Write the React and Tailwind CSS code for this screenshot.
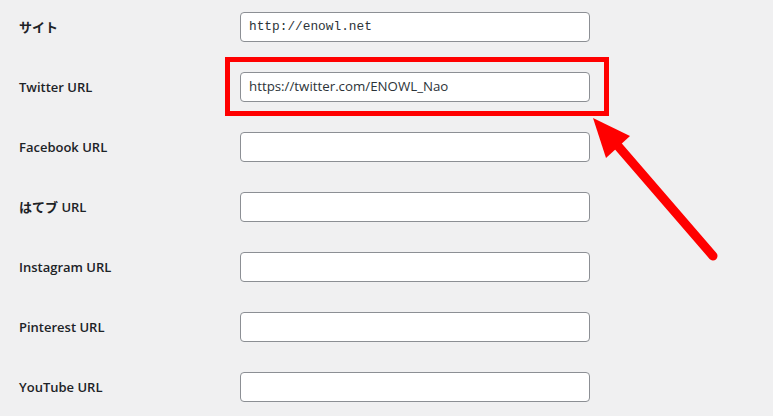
import React from "react";

const fields = [
  { label: "サイト", value: "http://enowl.net", mono: true },
  { label: "Twitter URL", value: "https://twitter.com/ENOWL_Nao" },
  { label: "Facebook URL", value: "" },
  { label: "はてブ URL", value: "" },
  { label: "Instagram URL", value: "" },
  { label: "Pinterest URL", value: "" },
  { label: "YouTube URL", value: "" },
];

const App = () => {
  return (
    <div className="relative w-[773px] h-[416px] overflow-hidden bg-[#f0f0f1] font-['Open_Sans','Noto_Sans_CJK_JP',sans-serif] text-[#1d2327]">
      <div className="flex flex-col gap-[30px] pt-[12px] pl-[19px]">
        {fields.map((f) => (
          <div key={f.label} className="flex items-center h-[30px]">
            <label className="w-[221px] pt-[2px] text-[13px] font-semibold">{f.label}</label>
            <div
              className={
                "w-[350px] h-[30px] flex items-center px-[8px] bg-white border border-[#8c8f94] rounded-[4px] text-[#2c3338] " +
                (f.mono ? "font-['Liberation_Mono',monospace] text-[12.8px]" : "text-[13.3px]")
              }
            >
              {f.value}
            </div>
          </div>
        ))}
      </div>

      {/* annotation: red box around Twitter field */}
      <div className="absolute left-[225px] top-[57px] w-[384px] h-[59px] border-[5px] border-[#ff0000]" />

      {/* annotation arrow */}
      <svg className="absolute left-0 top-0" width="773" height="416" viewBox="0 0 773 416">
        <line x1="713" y1="256" x2="618" y2="146" stroke="#ff0000" strokeWidth="9" strokeLinecap="round" />
        <polygon points="593,118 630,136 606,158" fill="#ff0000" />
      </svg>
    </div>
  );
};

export default App;
